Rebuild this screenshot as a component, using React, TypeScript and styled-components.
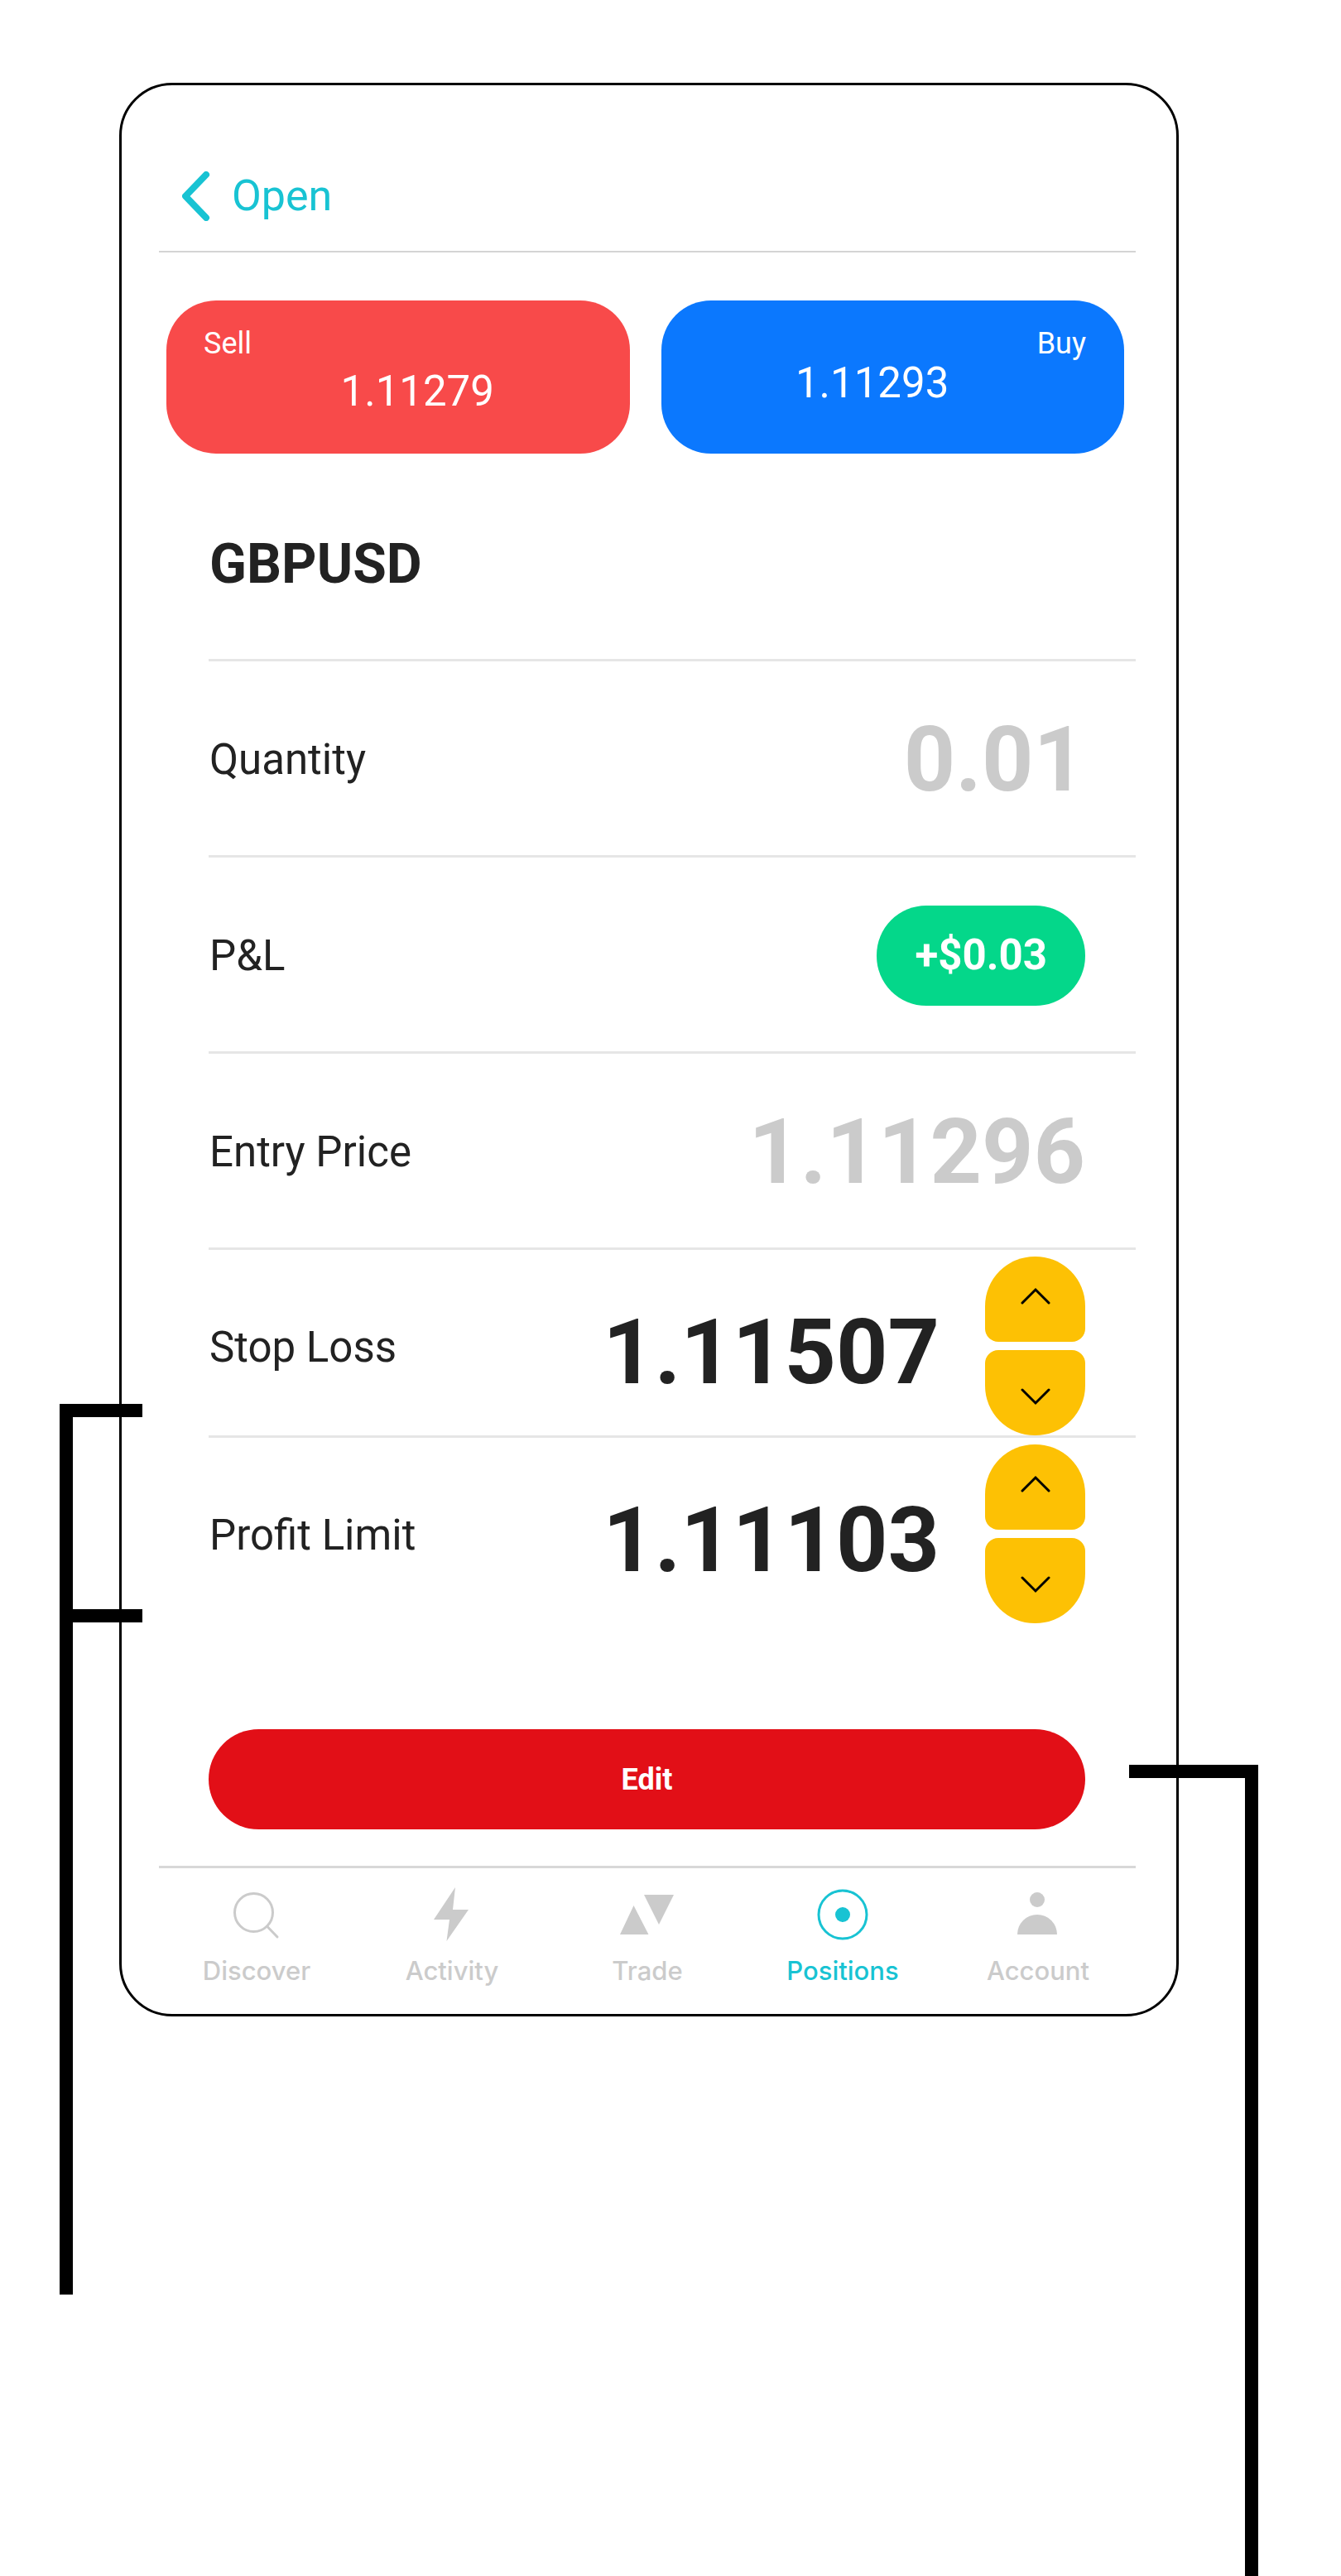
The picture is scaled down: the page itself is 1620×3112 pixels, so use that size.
import React, { useState } from "react";
import styled, { createGlobalStyle, css } from "styled-components";

const color = {
  ink: "#222222",
  muted: "#cbcbcb",
  teal: "#18c3d3",
  sell: "#f84a4a",
  buy: "#0b78fe",
  profit: "#04d78a",
  step: "#fdc104",
  danger: "#e20f17",
  rule: "#d4d4d4",
  rowRule: "#e6e6e6",
};

const GlobalStyle = createGlobalStyle`
  *, *::before, *::after { box-sizing: border-box; }
  body { margin: 0; background: #ffffff; }
  button, input { font: inherit; color: inherit; border: 0; margin: 0; padding: 0; background: none; }
  button { cursor: pointer; }
`;

const Page = styled.div`
  position: relative;
  min-height: 100vh;
  padding: 100px 196px 676px 144px;
  font-family: Roboto, "Liberation Sans", sans-serif;
  color: ${color.ink};
`;

const Phone = styled.main`
  padding: 0 49px 0 45px;
  border: 3px solid #000000;
  border-radius: 64px;
`;

const Header = styled.header`
  display: flex;
  padding: 104px 28px 36px;
  border-bottom: 2px solid ${color.rule};
`;

const BackLink = styled.a`
  display: flex;
  align-items: center;
  gap: 26px;
  font-size: 52px;
  line-height: 60px;
  color: ${color.teal};
  text-decoration: none;
`;

const Quotes = styled.section`
  display: grid;
  grid-template-columns: 1fr 1fr;
  gap: 38px;
  padding: 58px 14px 0 9px;
`;

const QuoteButton = styled.button<{ $side: "sell" | "buy" }>`
  display: flex;
  flex-direction: ${({ $side }) => ($side === "sell" ? "row" : "row-reverse")};
  height: 185px;
  padding: ${({ $side }) => ($side === "sell" ? "30px 56px 0 45px" : "30px 46px 0 56px")};
  border-radius: 60px;
  background: ${({ $side }) => color[$side]};
  color: #ffffff;
`;

const QuoteLabel = styled.span`
  font-size: 36px;
  line-height: 44px;
`;

const QuotePrice = styled.span<{ $drop: number }>`
  flex: 1;
  padding-top: ${({ $drop }) => $drop}px;
  font-size: 51px;
  line-height: 60px;
  text-align: center;
`;

const Details = styled.section`
  padding-left: 60px;
`;

const Symbol = styled.h1`
  margin: 0;
  padding: 94px 0 74px 1px;
  border-bottom: 3px solid ${color.rowRule};
  font-size: 66px;
  line-height: 80px;
  font-weight: 700;
`;

const Row = styled.div`
  display: flex;
  align-items: center;
  justify-content: space-between;
  height: 237px;
  padding: 3px 61px 0 1px;
  border-bottom: 3px solid ${color.rowRule};
`;

const StepRow = styled.div<{ $last?: boolean }>`
  display: flex;
  align-items: center;
  padding: 8px 61px 0 1px;
  border-bottom: ${({ $last }) => ($last ? "0" : `3px solid ${color.rowRule}`)};
`;

const labelText = css`
  font-size: 51px;
  line-height: 60px;
  white-space: nowrap;
`;

const RowLabel = styled.span`
  ${labelText}
`;

const FieldLabel = styled.label`
  ${labelText}
  padding-top: 3px;
`;

const bigNumber = css`
  font-size: 109px;
  line-height: 128px;
  font-weight: 700;
`;

const FixedValue = styled.span`
  ${bigNumber}
  color: ${color.muted};
`;

const ValueInput = styled.input`
  ${bigNumber}
  flex: 1;
  min-width: 0;
  height: 144px;
  padding-top: 16px;
  text-align: right;
  outline: 0;
`;

const ProfitPill = styled.span`
  padding: 30px 46px 31px;
  border-radius: 60px;
  background: ${color.profit};
  color: #ffffff;
  font-size: 51px;
  line-height: 60px;
  font-weight: 700;
`;

const Stepper = styled.div`
  display: grid;
  gap: 10px;
  width: 121px;
  margin-left: 55px;
`;

const StepButton = styled.button<{ $dir: "up" | "down" }>`
  display: flex;
  align-items: center;
  justify-content: center;
  height: 103px;
  padding: ${({ $dir }) => ($dir === "up" ? "0 0 8px" : "8px 0 0")};
  border-radius: ${({ $dir }) =>
    $dir === "up" ? "60px 60px 16px 16px" : "16px 16px 60px 60px"};
  background: ${color.step};
`;

const EditBar = styled.div`
  padding: 128px 61px 44px 60px;
`;

const EditButton = styled.button`
  width: 100%;
  height: 121px;
  border-radius: 61px;
  background: ${color.danger};
  color: #ffffff;
  font-size: 36px;
  line-height: 44px;
  font-weight: 700;
`;

const TabBar = styled.nav`
  display: grid;
  grid-template-columns: repeat(5, 1fr);
  padding: 23px 0 34px;
  border-top: 3px solid #d8d8d8;
`;

const Tab = styled.a<{ $active?: boolean }>`
  display: flex;
  flex-direction: column;
  align-items: center;
  gap: 17px;
  color: ${({ $active }) => ($active ? color.teal : color.muted)};
  font-family: Inter, Roboto, sans-serif;
  font-size: 31px;
  line-height: 36px;
  font-weight: 500;
  text-decoration: none;
`;

const Callout = styled.div`
  position: absolute;
  border: 0 solid #000000;
  border-top-width: 16px;
  pointer-events: none;
`;

const LimitsCallout = styled(Callout)`
  left: 72px;
  top: 1696px;
  width: 100px;
  height: 1076px;
  border-left-width: 16px;

  &::after {
    content: "";
    position: absolute;
    left: 0;
    right: 0;
    top: 232px;
    height: 16px;
    background: #000000;
  }
`;

const EditCallout = styled(Callout)`
  right: 100px;
  top: 2132px;
  bottom: 0;
  width: 156px;
  border-right-width: 16px;
`;

const BackIcon = () => (
  <svg width="34" height="60" viewBox="0 0 34 60" fill="none" aria-hidden="true">
    <path d="M29 4 4 30l25 26" stroke="currentColor" strokeWidth="8" strokeLinecap="round" strokeLinejoin="round" />
  </svg>
);

const Chevron = ({ dir }: { dir: "up" | "down" }) => (
  <svg width="36" height="22" viewBox="0 0 36 22" fill="none" aria-hidden="true">
    <path
      d={dir === "up" ? "M2 19 18 3l16 16" : "M2 3l16 16L34 3"}
      stroke="#000000"
      strokeWidth="3"
      strokeLinecap="round"
    />
  </svg>
);

const TabIcon = ({ children }: { children: React.ReactNode }) => (
  <svg width="66" height="66" viewBox="0 0 66 66" fill="currentColor" aria-hidden="true">
    {children}
  </svg>
);

const tabs = [
  {
    name: "Discover",
    icon: (
      <g fill="none" stroke="currentColor" strokeWidth="3">
        <circle cx="29.5" cy="30.5" r="23" />
        <path d="M45.5 47 58 60" strokeLinecap="round" />
      </g>
    ),
  },
  { name: "Activity", icon: <path d="M37 0 34 27h19L26.500 65 30 39H11z" /> },
  { name: "Trade", icon: <path d="M16.500 22 34.500 57H0zM29 9h36L47 45z" /> },
  {
    name: "Positions",
    active: true,
    icon: (
      <>
        <circle cx="33" cy="33" r="29" fill="none" stroke="currentColor" strokeWidth="3" />
        <circle cx="33" cy="33" r="9" />
      </>
    ),
  },
  {
    name: "Account",
    icon: (
      <>
        <circle cx="32" cy="15" r="9" />
        <path d="M8 57a24 24 0 0 1 48 0z" />
      </>
    ),
  },
];

type FieldProps = { id: string; label: string; initial: string; last?: boolean };

const StepField = ({ id, label, initial, last }: FieldProps) => {
  const [value, setValue] = useState(initial);
  const step = (delta: number) => setValue((v) => (Number(v) + delta).toFixed(5));
  return (
    <StepRow $last={last}>
      <FieldLabel htmlFor={id}>{label}</FieldLabel>
      <ValueInput id={id} type="text" inputMode="decimal" value={value} onChange={(e) => setValue(e.target.value)} />
      <Stepper>
        <StepButton $dir="up" type="button" aria-label={`Raise ${label}`} onClick={() => step(0.00001)}>
          <Chevron dir="up" />
        </StepButton>
        <StepButton $dir="down" type="button" aria-label={`Lower ${label}`} onClick={() => step(-0.00001)}>
          <Chevron dir="down" />
        </StepButton>
      </Stepper>
    </StepRow>
  );
};

export default function App() {
  return (
    <Page>
      <GlobalStyle />
      <Phone>
        <Header>
          <BackLink href="#open">
            <BackIcon />
            Open
          </BackLink>
        </Header>
        <Quotes>
          <QuoteButton $side="sell" type="button">
            <QuoteLabel>Sell</QuoteLabel>
            <QuotePrice $drop={50}>1.11279</QuotePrice>
          </QuoteButton>
          <QuoteButton $side="buy" type="button">
            <QuoteLabel>Buy</QuoteLabel>
            <QuotePrice $drop={40}>1.11293</QuotePrice>
          </QuoteButton>
        </Quotes>
        <Details>
          <Symbol>GBPUSD</Symbol>
          <Row>
            <RowLabel>Quantity</RowLabel>
            <FixedValue>0.01</FixedValue>
          </Row>
          <Row>
            <RowLabel>P&amp;L</RowLabel>
            <ProfitPill>+$0.03</ProfitPill>
          </Row>
          <Row>
            <RowLabel>Entry Price</RowLabel>
            <FixedValue>1.11296</FixedValue>
          </Row>
          <StepField id="stop-loss" label="Stop Loss" initial="1.11507" />
          <StepField id="profit-limit" label="Profit Limit" initial="1.11103" last />
        </Details>
        <EditBar>
          <EditButton type="button">Edit</EditButton>
        </EditBar>
        <TabBar>
          {tabs.map((tab) => (
            <Tab key={tab.name} href={`#${tab.name.toLowerCase()}`} $active={tab.active}>
              <TabIcon>{tab.icon}</TabIcon>
              {tab.name}
            </Tab>
          ))}
        </TabBar>
      </Phone>
      <LimitsCallout />
      <EditCallout />
    </Page>
  );
}
